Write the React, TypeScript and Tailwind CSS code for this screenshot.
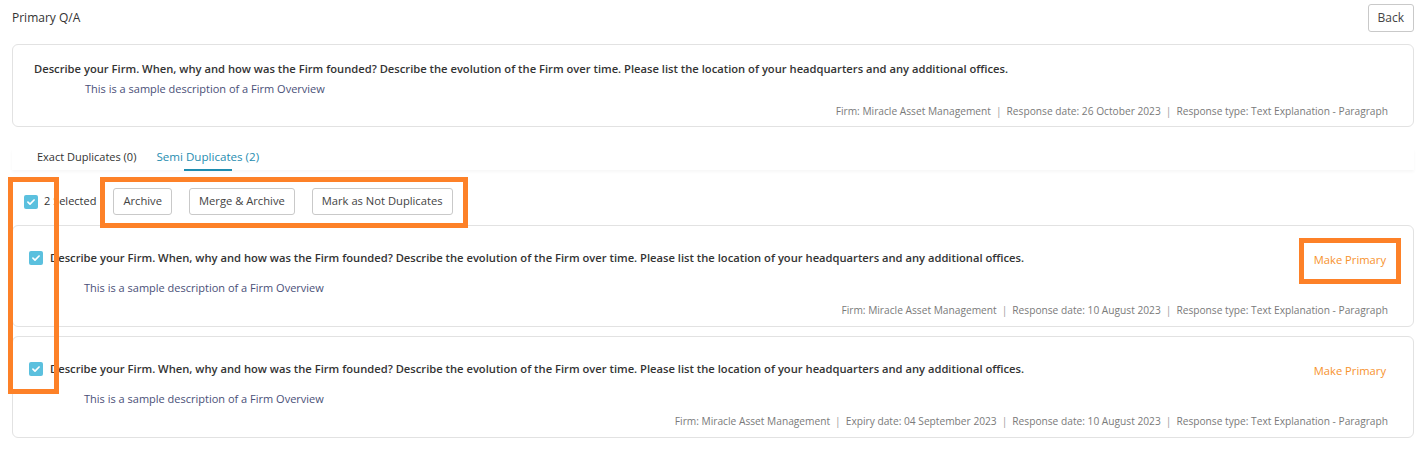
import type { ReactNode } from 'react';

type Duplicate = {
  meta: string[];
};

const QUESTION =
  'Describe your Firm. When, why and how was the Firm founded? Describe the evolution of the Firm over time. Please list the location of your headquarters and any additional offices.';
const DESCRIPTION = 'This is a sample description of a Firm Overview';

const DUPLICATES: Duplicate[] = [
  {
    meta: [
      'Firm: Miracle Asset Management',
      'Response date: 10 August 2023',
      'Response type: Text Explanation - Paragraph',
    ],
  },
  {
    meta: [
      'Firm: Miracle Asset Management',
      'Expiry date: 04 September 2023',
      'Response date: 10 August 2023',
      'Response type: Text Explanation - Paragraph',
    ],
  },
];

function Checkbox() {
  return (
    <span className="flex h-[14px] w-[14px] shrink-0 items-center justify-center rounded-[2px] bg-[#5bc0de]">
      <svg viewBox="0 0 12 12" className="h-[10px] w-[10px]" fill="none">
        <path d="M2.3 6.2 4.8 8.6 9.7 3.6" stroke="white" strokeWidth="2" strokeLinecap="round" strokeLinejoin="round" />
      </svg>
    </span>
  );
}

function Meta({ items }: { items: string[] }) {
  return (
    <div className="flex justify-end text-[10.2px] leading-[14px] text-[#7a7a7a]">
      {items.map((item, i) => (
        <span key={item}>
          {i > 0 ? <span className="px-[5px] text-[#9a9a9a]">|</span> : null}
          {item}
        </span>
      ))}
    </div>
  );
}

function ToolButton({ children }: { children: ReactNode }) {
  return (
    <button className="h-[27px] rounded-[3px] border border-[#c9c9c9] bg-white px-[9px] text-[11.2px] text-[#444]">
      {children}
    </button>
  );
}

export default function App() {
  return (
    <div
      className="relative min-h-[456px] w-full bg-white pl-[12px] pr-[10px] text-[#333]"
      style={{ fontFamily: '"Open Sans", "Noto Sans", sans-serif' }}
    >
      <div className="flex items-center justify-between pt-[4px]">
        <h1 className="text-[12px] font-medium leading-[28px] text-[#333]">Primary Q/A</h1>
        <button className="h-[28px] rounded-[3px] border border-[#c9c9c9] bg-white px-[9px] text-[12px] text-[#444]">
          Back
        </button>
      </div>

      <div className="mt-[12px] rounded-[6px] border border-[#e2e2e2] px-[21px] pb-[8px] pt-[15px]">
        <p className="text-[11.2px] font-semibold leading-[18px] text-[#333]">{QUESTION}</p>
        <p className="ml-[51px] mt-[2px] text-[11px] leading-[18px] text-[#4a5078]">{DESCRIPTION}</p>
        <div className="mt-[6px] pr-[4px]">
          <Meta
            items={[
              'Firm: Miracle Asset Management',
              'Response date: 26 October 2023',
              'Response type: Text Explanation - Paragraph',
            ]}
          />
        </div>
      </div>

      <div className="mt-[22px] shadow-[0_2px_3px_rgba(0,0,0,0.035)]">
        <div className="flex pl-[15px] text-[11px] leading-[16px]">
          <div className="px-[10px] pb-[5px] text-[#333]">Exact Duplicates (0)</div>
          <div className="relative px-[10px] pb-[5px] text-[11.6px] text-[#1f8db0]">
            Semi Duplicates (2)
            <span className="absolute bottom-[-1px] left-1/2 h-[2px] w-[48px] -translate-x-1/2 bg-[#1f8db0]" />
          </div>
        </div>
      </div>

      <div className="mt-[18px] flex items-center pl-[12px]">
        <Checkbox />
        <span className="ml-[6px] text-[11px] text-[#333]">2 Selected</span>
        <div className="ml-[17px] flex gap-[17px]">
          <ToolButton>Archive</ToolButton>
          <ToolButton>Merge &amp; Archive</ToolButton>
          <ToolButton>Mark as Not Duplicates</ToolButton>
        </div>
      </div>

      <div className="mt-[10px] flex flex-col gap-[9px]">
        {DUPLICATES.map((dup, i) => (
          <div key={i} className="rounded-[6px] border border-[#e2e2e2] pb-[9px] pl-[16px] pr-[25px] pt-[23px]">
            <div className="flex items-start justify-between">
              <div className="flex items-center gap-[7px]">
                <Checkbox />
                <p className="text-[11.2px] font-semibold leading-[18px] text-[#333]">{QUESTION}</p>
              </div>
              <button className="mr-[2px] mt-[2px] text-[11.2px] leading-[18px] text-[#f7922d]">Make Primary</button>
            </div>
            <p className="ml-[55px] mt-[10px] text-[11px] leading-[18px] text-[#4a5078]">{DESCRIPTION}</p>
            <div className="mt-[6px]">
              <Meta items={dup.meta} />
            </div>
          </div>
        ))}
      </div>

      {/* annotation boxes drawn over the screenshot */}
      <div className="pointer-events-none absolute left-[8px] top-[177px] h-[217px] w-[51px] border-[5px] border-[#fd8128]" />
      <div className="pointer-events-none absolute left-[100px] top-[177px] h-[51px] w-[368px] border-[5px] border-[#fd8128]" />
      <div className="pointer-events-none absolute left-[1299px] top-[238px] h-[46px] w-[102px] border-[5px] border-[#fd8128]" />
    </div>
  );
}
